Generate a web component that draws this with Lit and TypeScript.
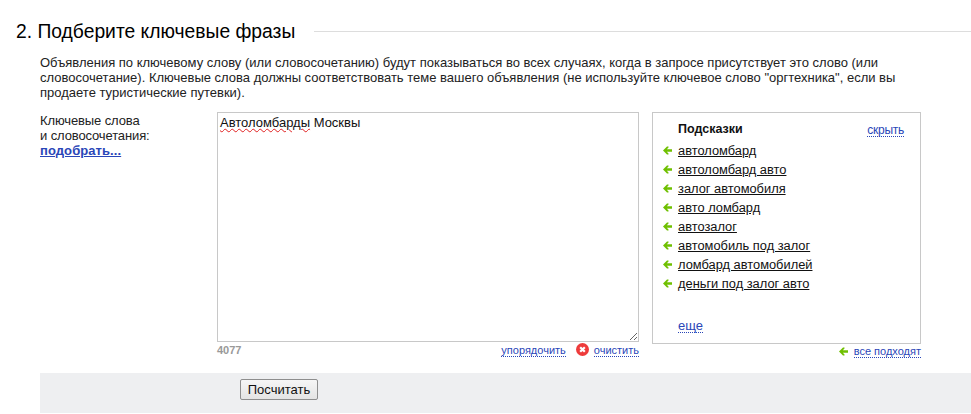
import { LitElement, html, css } from "lit";
import { customElement } from "lit/decorators.js";

const hints = [
  "автоломбард",
  "автоломбард авто",
  "залог автомобиля",
  "авто ломбард",
  "автозалог",
  "автомобиль под залог",
  "ломбард автомобилей",
  "деньги под залог авто",
];

const arrow = html`<svg class="arrow" width="9" height="9" viewBox="0 0 9 9"><path d="M0 4.5 L4 0.5 L5.5 0.5 L5.5 1.5 L3.8 3.2 L9 3.2 L9 5.8 L3.8 5.8 L5.5 7.5 L5.5 8.5 L4 8.5 Z" fill="#6fc000"/></svg>`;

@customElement("app-root")
export class AppRoot extends LitElement {
  static styles = css`
    :host {
      display: block;
      width: 971px;
      height: 414px;
      overflow: hidden;
      background: #fff;
      font-family: "Liberation Sans", Arial, sans-serif;
      font-size: 13px;
      line-height: 15px;
      color: #222;
    }
    .head {
      display: flex;
      align-items: center;
      gap: 19px;
      padding: 21px 0 0 16px;
      height: 22px;
    }
    .head h2 {
      margin: 0;
      font-size: 19.3px;
      line-height: 22px;
      font-weight: 400;
      color: #000;
      white-space: nowrap;
    }
    .head .rule {
      flex: 1;
      height: 1px;
      margin-top: -2px;
      background: #ddd;
    }
    .intro {
      margin: 12px 0 0 40px;
      width: 880px;
      height: 45px;
    }
    .form {
      display: flex;
      margin: 12px 0 0 40px;
    }
    .label {
      width: 177px;
      flex: none;
      padding-top: 1px;
      letter-spacing: -0.12px;
    }
    .label a {
      display: inline-block;
      font-weight: 700;
      letter-spacing: 0.08px;
      color: #2a46b8;
      text-decoration: underline;
    }
    .middle {
      width: 422px;
      flex: none;
    }
    .ta {
      box-sizing: border-box;
      width: 422px;
      height: 230px;
      border: 1px solid #c8c8c8;
      padding: 2px;
      color: #111;
      overflow: auto;
      resize: vertical;
    }
    .wavy {
      text-decoration: underline wavy #e02020 1px;
      text-underline-offset: 1px;
    }
    .under {
      display: flex;
      align-items: flex-start;
      font-size: 11px;
      line-height: 13px;
      height: 14px;
      margin-top: 1px;
    }
    .count {
      color: #999;
      font-weight: 700;
      flex: 1;
      line-height: 15px;
    }
    .dash {
      color: #2a46b8;
      border-bottom: 1px dotted #2a46b8;
      line-height: 12px;
    }
    .under .dash {
      margin-top: 1px;
    }
    .clear {
      margin: 0 5px 0 10px;
      display: block;
    }
    .side {
      width: 269px;
      margin-left: 13px;
      flex: none;
    }
    .panel {
      box-sizing: border-box;
      height: 232px;
      border: 1px solid #c8c8c8;
      padding: 9px 16px 0 25px;
      display: flex;
      flex-direction: column;
    }
    .ptitle {
      display: flex;
      justify-content: space-between;
      align-items: flex-start;
      height: 19px;
    }
    .ptitle b {
      font-size: 12.5px;
      color: #111;
    }
    .ptitle .dash {
      font-size: 12px;
      letter-spacing: -0.25px;
      margin-top: 2px;
    }
    .hints {
      list-style: none;
      margin: 0 0 0 -15px;
      padding: 0;
    }
    .hints li {
      display: flex;
      align-items: center;
      gap: 6px;
      height: 19px;
      font-size: 12.85px;
    }
    .hints a {
      color: #111;
      text-decoration: underline;
    }
    .arrow {
      display: block;
      flex: none;
    }
    .more {
      margin-top: auto;
      margin-bottom: 10px;
      align-self: flex-start;
      font-size: 13px;
    }
    .all {
      display: flex;
      justify-content: flex-end;
      align-items: center;
      gap: 6px;
      font-size: 11px;
      height: 14px;
    }
    .bar {
      margin: 15px 0 0 40px;
      height: 40px;
      background: #eeeff1;
      padding: 6px 0 0 200px;
      box-sizing: border-box;
    }
    button {
      box-sizing: border-box;
      width: 78px;
      height: 21px;
      padding: 0;
      font: 13px "Liberation Sans", Arial, sans-serif;
      color: #111;
      border: 1px solid #8e8e8e;
      border-radius: 2px;
      background: linear-gradient(#f6f6f6, #e4e4e4);
    }
  `;

  render() {
    return html`
      <div class="head"><h2>2. Подберите ключевые фразы</h2><div class="rule"></div></div>
      <div class="intro">Объявления по ключевому слову (или словосочетанию) будут показываться во всех случаях, когда в запросе присутствует это слово (или словосочетание). Ключевые слова должны соответствовать теме вашего объявления (не используйте ключевое слово "оргтехника", если вы продаете туристические путевки).</div>
      <div class="form">
        <div class="label">Ключевые слова<br />и словосочетания:<br /><a>подобрать...</a></div>
        <div class="middle">
          <div class="ta"><span class="wavy">Автоломбарды</span> Москвы</div>
          <div class="under">
            <span class="count">4077</span>
            <span class="dash">упорядочить</span>
            <svg class="clear" width="13" height="13" viewBox="0 0 13 13"><circle cx="6.5" cy="6.5" r="6.5" fill="#ee3b3b"/><path d="M4.2 4.2 L8.8 8.8 M8.8 4.2 L4.2 8.8" stroke="#fff" stroke-width="2.2"/></svg>
            <span class="dash">очистить</span>
          </div>
        </div>
        <div class="side">
          <div class="panel">
            <div class="ptitle"><b>Подсказки</b><span class="dash">скрыть</span></div>
            <ul class="hints">
              ${hints.map((h) => html`<li>${arrow}<a>${h}</a></li>`)}
            </ul>
            <span class="dash more">еще</span>
          </div>
          <div class="all">${arrow}<span class="dash">все подходят</span></div>
        </div>
      </div>
      <div class="bar"><button>Посчитать</button></div>
    `;
  }
}
